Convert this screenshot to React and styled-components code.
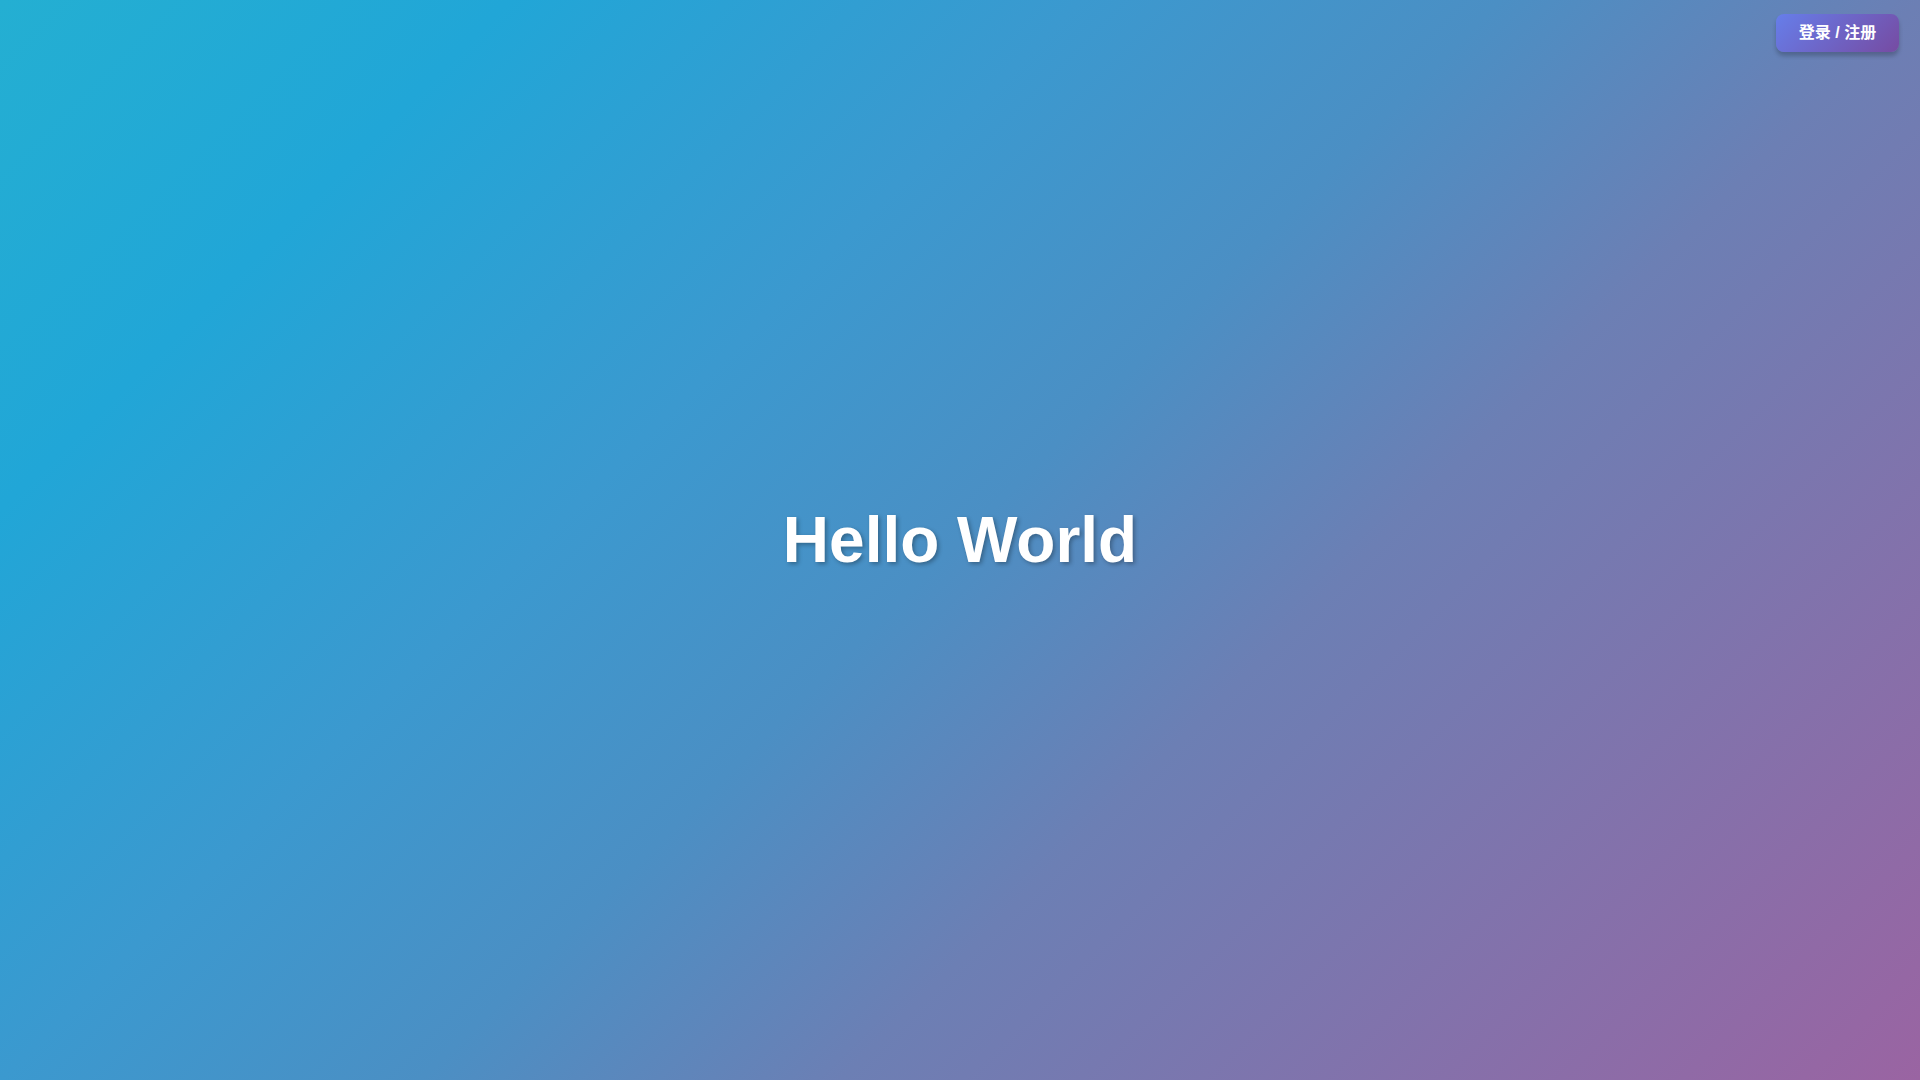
import React from 'react'
import styled, { createGlobalStyle } from 'styled-components'

const GlobalStyle = createGlobalStyle`
  html, body, #root {
    margin: 0;
    padding: 0;
    height: 100%;
  }
  body {
    font-family: "Liberation Sans", Arial, "Noto Sans CJK SC", sans-serif;
    overflow: hidden;
  }
`

const Page = styled.main`
  position: relative;
  width: 100vw;
  height: 100vh;
  display: flex;
  align-items: center;
  justify-content: center;
  background: linear-gradient(
    135deg,
    #24afd2 0%,
    #21a6d7 17%,
    #3b99cf 36%,
    #4b8fc4 50%,
    #6c7fb4 64%,
    #9a64a2 100%
  );
`

const Title = styled.h1`
  margin: 0;
  color: #fff;
  font-size: 64px;
  font-weight: 700;
  line-height: 1.2;
  text-shadow: 2px 2px 4px rgba(0, 0, 0, 0.3);
`

const AuthButton = styled.button`
  position: absolute;
  top: 14px;
  right: 21px;
  width: 123px;
  height: 38px;
  padding: 0;
  border: none;
  border-radius: 8px;
  background: linear-gradient(135deg, #667eea 0%, #764ba2 100%);
  color: #fff;
  font-family: "Liberation Sans", Arial, "Noto Sans CJK SC", sans-serif;
  font-size: 16px;
  font-weight: 700;
  line-height: 1;
  cursor: pointer;
  box-shadow: 0 4px 4px rgba(0, 0, 0, 0.22);
`

const App = () => {
  return (
    <>
      <GlobalStyle />
      <Page>
        <Title>Hello World</Title>
        <AuthButton>登录 / 注册</AuthButton>
      </Page>
    </>
  )
}

export default App
